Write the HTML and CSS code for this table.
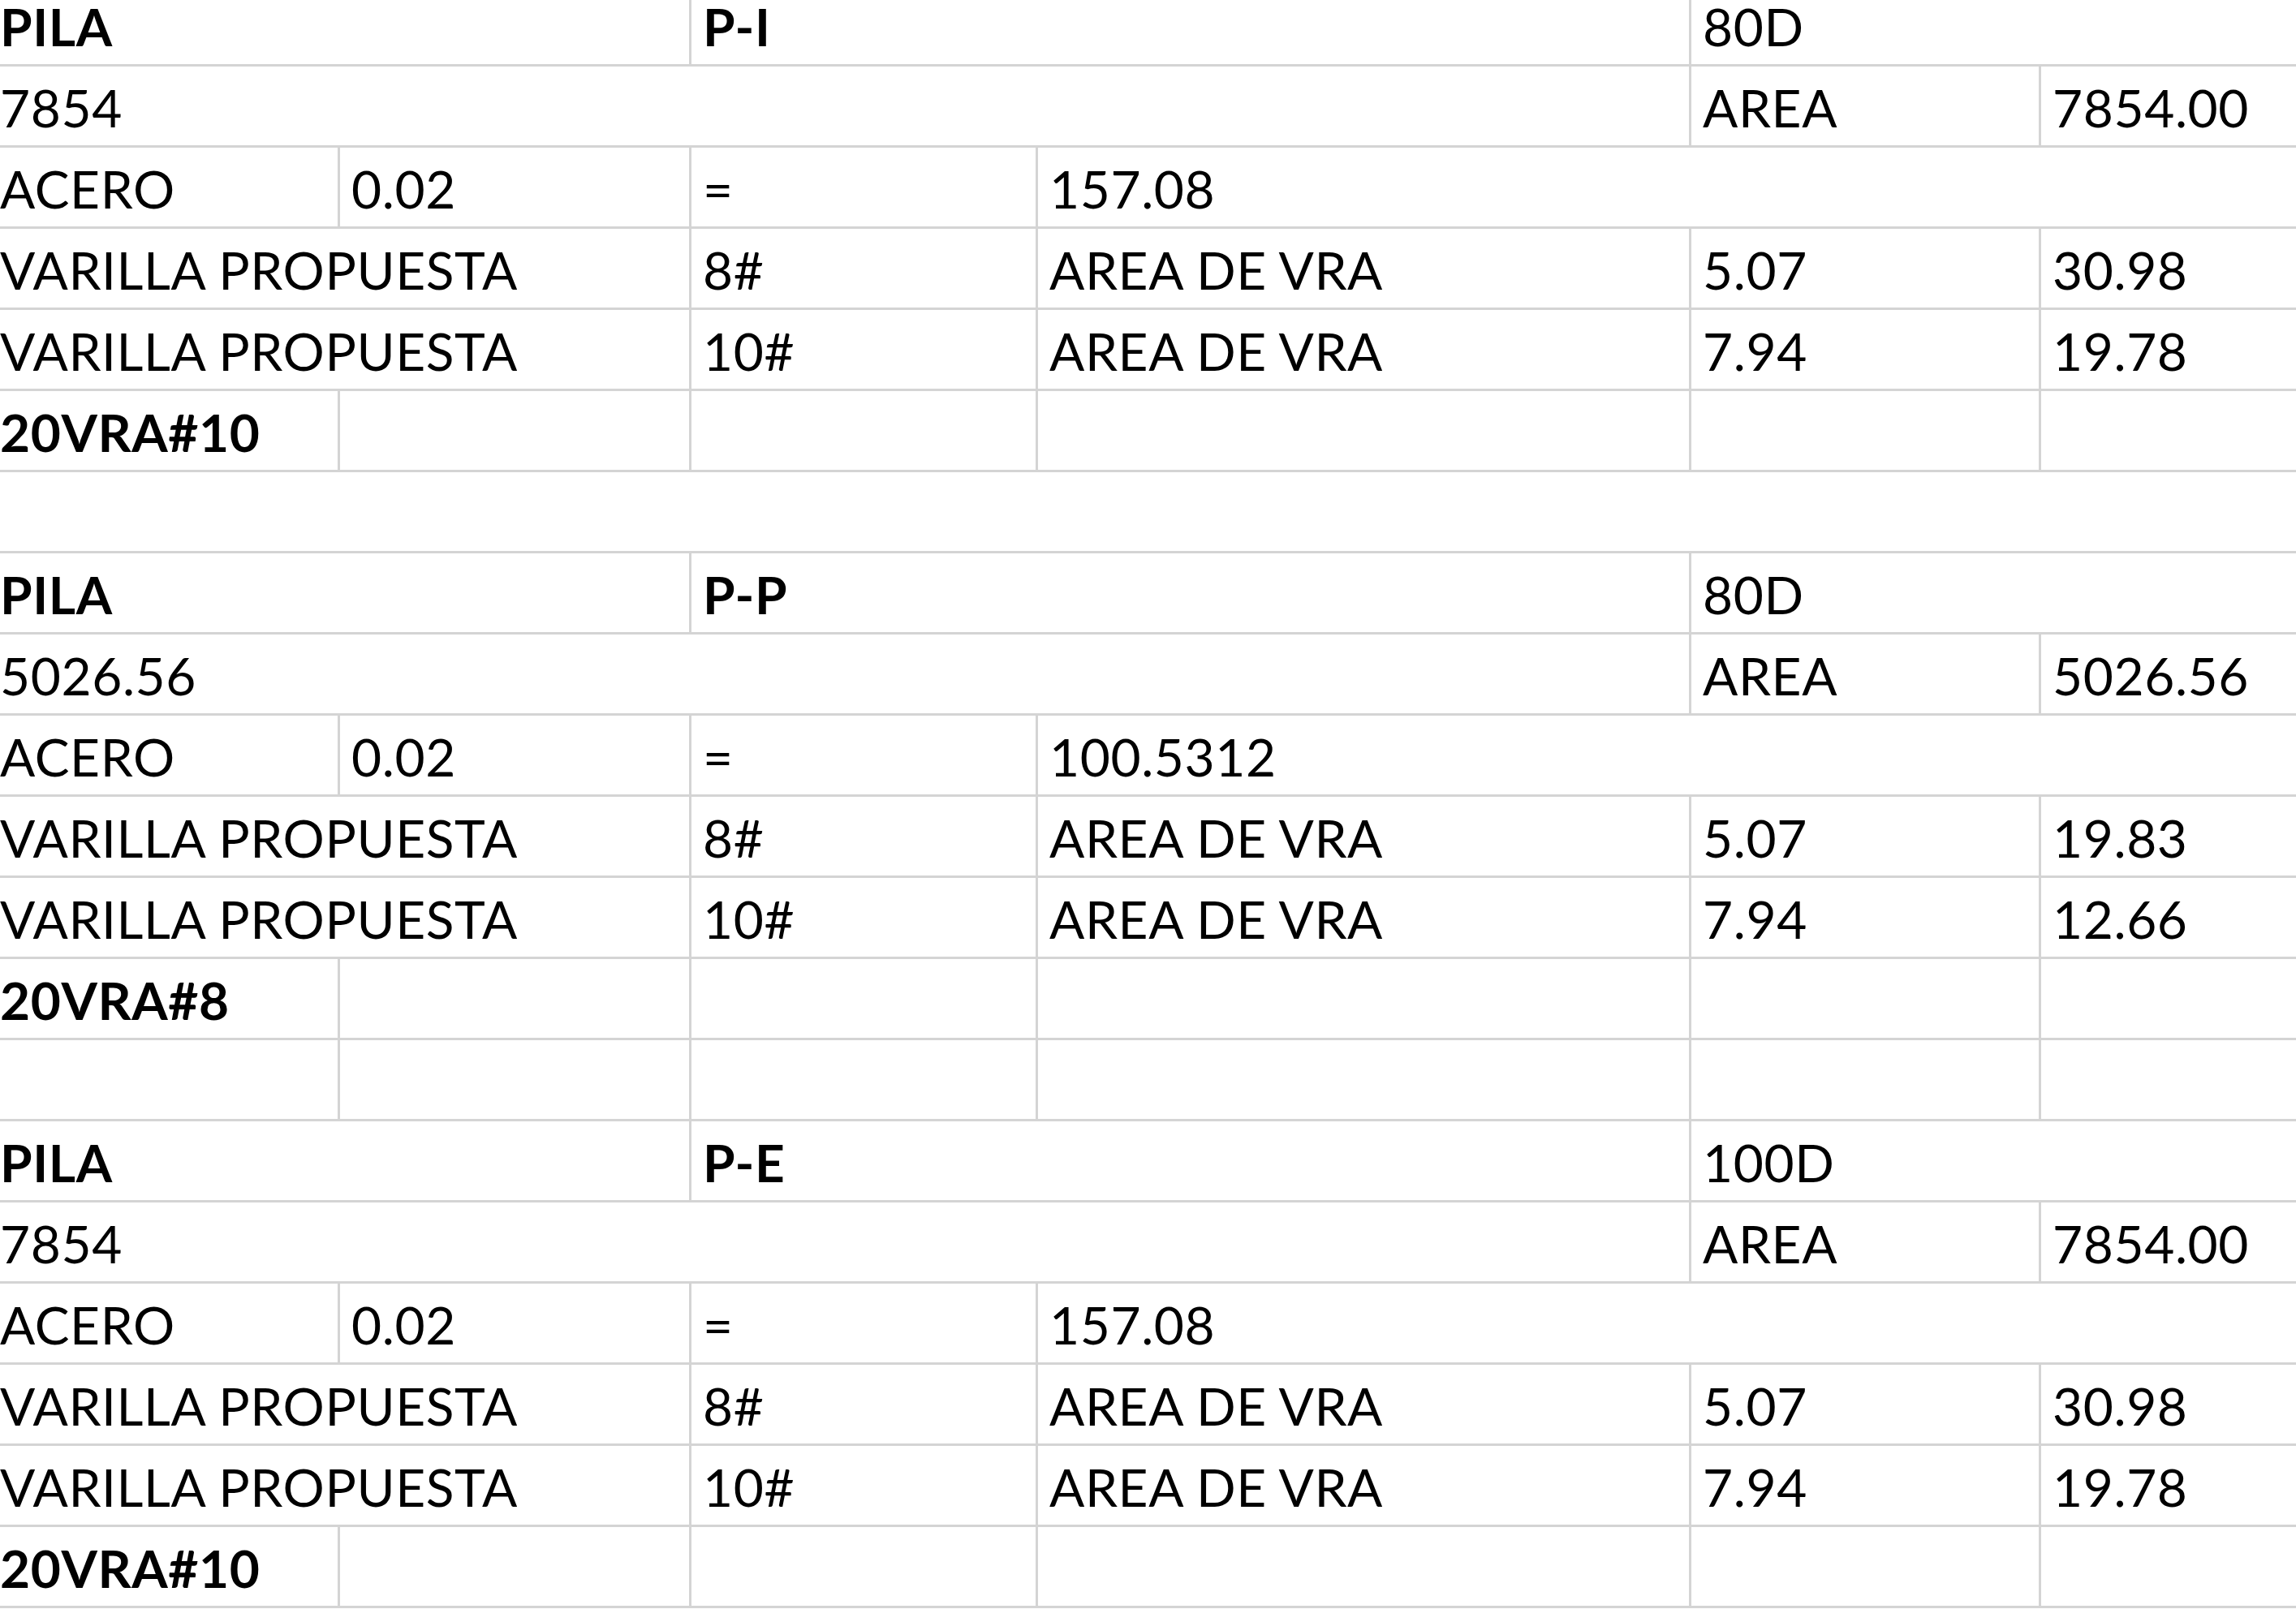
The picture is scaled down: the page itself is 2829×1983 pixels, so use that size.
FILE: index.html
```html
<!DOCTYPE html>
<html lang="es">
<head>
<meta charset="utf-8">
<title>PILA</title>
<link rel="stylesheet" href="styles.css">
</head>
<body>
<div class="sheet">
  <!-- Block 1 -->
  <div class="c a b s2">PILA</div>
  <div class="c b s2">P-I</div>
  <div class="c s2">80D</div>

  <div class="c a s4">7854</div>
  <div class="c">AREA</div>
  <div class="c">7854.00</div>

  <div class="c a">ACERO</div>
  <div class="c">0.02</div>
  <div class="c">=</div>
  <div class="c s3">157.08</div>

  <div class="c a s2">VARILLA PROPUESTA</div>
  <div class="c">8#</div>
  <div class="c">AREA DE VRA</div>
  <div class="c">5.07</div>
  <div class="c">30.98</div>

  <div class="c a s2">VARILLA PROPUESTA</div>
  <div class="c">10#</div>
  <div class="c">AREA DE VRA</div>
  <div class="c">7.94</div>
  <div class="c">19.78</div>

  <div class="c a b">20VRA#10</div>
  <div class="c"></div>
  <div class="c"></div>
  <div class="c"></div>
  <div class="c"></div>
  <div class="c"></div>

  <div class="c a s6"></div>

  <!-- Block 2 -->
  <div class="c a b s2">PILA</div>
  <div class="c b s2">P-P</div>
  <div class="c s2">80D</div>

  <div class="c a s4">5026.56</div>
  <div class="c">AREA</div>
  <div class="c">5026.56</div>

  <div class="c a">ACERO</div>
  <div class="c">0.02</div>
  <div class="c">=</div>
  <div class="c s3">100.5312</div>

  <div class="c a s2">VARILLA PROPUESTA</div>
  <div class="c">8#</div>
  <div class="c">AREA DE VRA</div>
  <div class="c">5.07</div>
  <div class="c">19.83</div>

  <div class="c a s2">VARILLA PROPUESTA</div>
  <div class="c">10#</div>
  <div class="c">AREA DE VRA</div>
  <div class="c">7.94</div>
  <div class="c">12.66</div>

  <div class="c a b">20VRA#8</div>
  <div class="c"></div>
  <div class="c"></div>
  <div class="c"></div>
  <div class="c"></div>
  <div class="c"></div>

  <div class="c a"></div>
  <div class="c"></div>
  <div class="c"></div>
  <div class="c"></div>
  <div class="c"></div>
  <div class="c"></div>

  <!-- Block 3 -->
  <div class="c a b s2">PILA</div>
  <div class="c b s2">P-E</div>
  <div class="c s2">100D</div>

  <div class="c a s4">7854</div>
  <div class="c">AREA</div>
  <div class="c">7854.00</div>

  <div class="c a">ACERO</div>
  <div class="c">0.02</div>
  <div class="c">=</div>
  <div class="c s3">157.08</div>

  <div class="c a s2">VARILLA PROPUESTA</div>
  <div class="c">8#</div>
  <div class="c">AREA DE VRA</div>
  <div class="c">5.07</div>
  <div class="c">30.98</div>

  <div class="c a s2">VARILLA PROPUESTA</div>
  <div class="c">10#</div>
  <div class="c">AREA DE VRA</div>
  <div class="c">7.94</div>
  <div class="c">19.78</div>

  <div class="c a b">20VRA#10</div>
  <div class="c"></div>
  <div class="c"></div>
  <div class="c"></div>
  <div class="c"></div>
  <div class="c"></div>
</div>
</body>
</html>
```
FILE: styles.css
```css
html, body {
  margin: 0;
  padding: 0;
  background: #ffffff;
  overflow: hidden;
}

.sheet {
  display: grid;
  grid-template-columns: 419px 433px 427px 805px 431px 431px;
  grid-template-rows: 82px;
  grid-auto-rows: 100px;
  font-family: Lato, "Open Sans", sans-serif;
  font-size: 64px;
  letter-spacing: 0.6px;
  color: #000000;
}

.c {
  display: flex;
  align-items: flex-end;
  box-sizing: border-box;
  border-right: 3px solid #d4d4d4;
  border-bottom: 3px solid #d4d4d4;
  padding: 0 0 14px 14px;
  line-height: 1;
  white-space: nowrap;
}

.a { padding-left: 0; }

.b { font-weight: 700; }

.s2 { grid-column: span 2; }
.s3 { grid-column: span 3; }
.s4 { grid-column: span 4; }
.s6 { grid-column: span 6; border-right: none; }
```
